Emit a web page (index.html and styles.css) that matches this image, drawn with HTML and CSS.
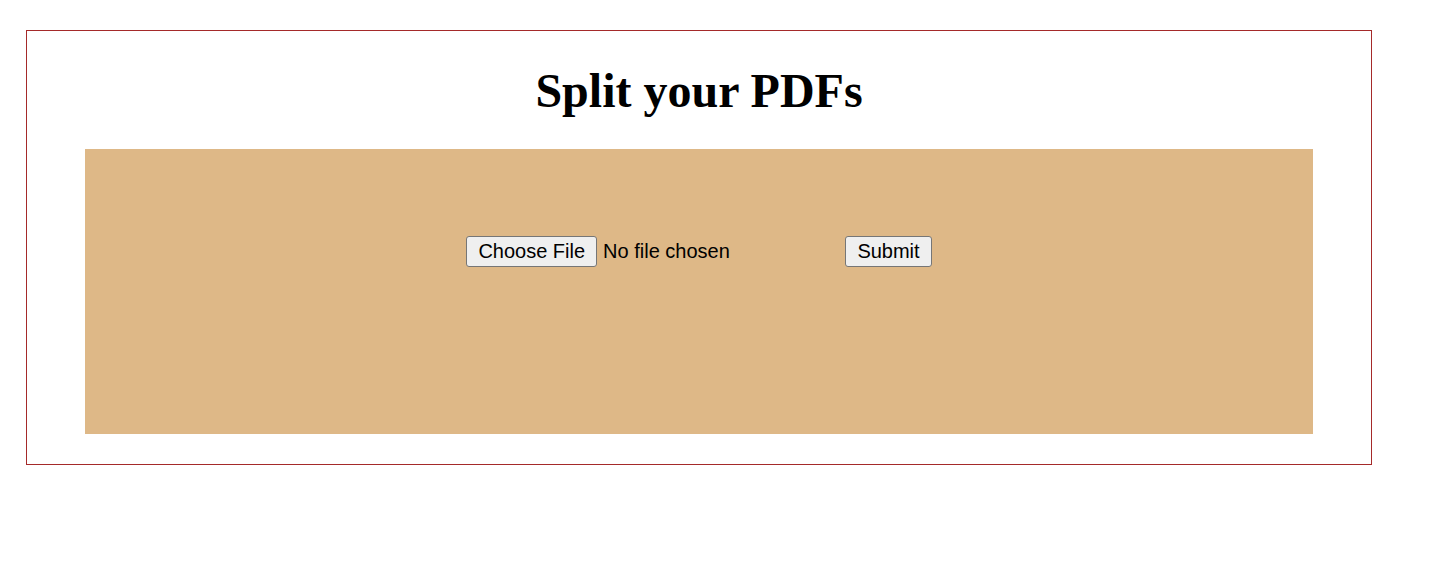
FILE: index.html
```html
<!DOCTYPE html>
<html>
<head>
<meta charset="utf-8">
<title>Split your PDFs</title>
<link rel="stylesheet" href="styles.css">
</head>
<body>
<div class="container">
  <h1 class="title">Split your PDFs</h1>
  <div class="panel">
    <form class="upload-form">
      <input class="file-input" type="file" name="pdf"><button class="submit-btn" type="submit">Submit</button>
    </form>
  </div>
</div>
</body>
</html>
```

FILE: styles.css
```css
body {
  margin: 8px;
  font-family: "Liberation Serif", "Times New Roman", serif;
}

.container {
  margin: 22px 0 0 18px;
  width: 1346px;
  border: 1px solid #a52a2a;
  padding: 1px 58px 29px 58px;
  box-sizing: border-box;
  height: 435px;
}

.title {
  font-family: "Liberation Serif", "Times New Roman", serif;
  font-size: 48px;
  font-weight: bold;
  text-align: center;
  margin: 31px 0 31px;
  line-height: 55px;
  color: #000;
}

.panel {
  background: #deb887;
  height: 285px;
  box-sizing: border-box;
  padding-top: 87px;
}

.upload-form {
  display: flex;
  justify-content: center;
  align-items: flex-start;
}

.file-input {
  font-family: "Liberation Sans", Arial, sans-serif;
  font-size: 20px;
  color: #000;
  width: 379px;
}

.file-input::file-selector-button {
  font-family: "Liberation Sans", Arial, sans-serif;
  font-size: 20px;
  color: #000;
  background: #efefef;
  border: 1px solid #767676;
  border-radius: 3px;
  padding: 3px 11px;
  margin-right: 6px;
}

.submit-btn {
  font-family: "Liberation Sans", Arial, sans-serif;
  font-size: 20px;
  color: #000;
  background: #efefef;
  border: 1px solid #767676;
  border-radius: 3px;
  padding: 3px 11px;
}
```
